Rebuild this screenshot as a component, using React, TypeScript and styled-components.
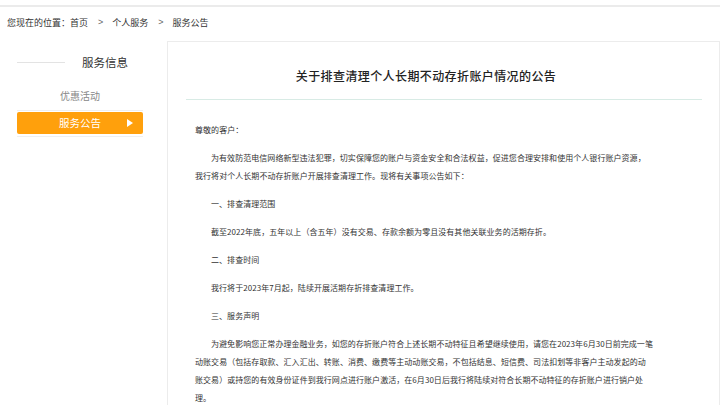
import React from 'react';
import styled, { createGlobalStyle } from 'styled-components';

const GlobalStyle = createGlobalStyle`
  html, body {
    margin: 0;
    padding: 0;
    background: #fff;
  }
  body {
    font-family: "Noto Sans CJK SC", "Liberation Sans", sans-serif;
    color: #333;
    overflow: hidden;
  }
`;

const Page = styled.div`
  width: 720px;
  height: 405px;
  overflow: hidden;
`;

const TopRule = styled.div`
  margin-top: 5px;
  height: 2px;
  background: #ebebeb;
`;

const Breadcrumb = styled.div`
  display: flex;
  align-items: center;
  margin: 8px 0 12px 7px;
  height: 14px;
  font-size: 9px;
  color: #333;
`;

const Crumb = styled.span``;

const Sep = styled.span`
  margin: 0 9px 0 10px;
  color: #666;
  font-family: "Liberation Sans", sans-serif;
`;

const Layout = styled.div`
  display: flex;
  align-items: flex-start;
`;

const Sidebar = styled.aside`
  width: 126px;
  margin-left: 17px;
  flex-shrink: 0;
`;

const SideTitle = styled.div`
  display: flex;
  align-items: center;
  padding-top: 14px;
  height: 14px;
  margin-bottom: 17px;
  font-size: 11.5px;
  line-height: 14px;
  color: #333;
`;

const SideLine = styled.span`
  width: 48px;
  height: 1px;
  background: #e3e3e3;
  margin-right: 17px;
`;

const MenuItem = styled.div`
  height: 24px;
  line-height: 20px;
  text-align: center;
  font-size: 10px;
  color: #888;
  border-bottom: 1px solid #efefef;
`;

const ActiveItem = styled.div`
  position: relative;
  margin-top: 1px;
  height: 22px;
  line-height: 22px;
  text-align: center;
  font-size: 10.5px;
  color: #fff;
  background: #ffa00c;
  border-radius: 2px;
`;

const Arrow = styled.span`
  position: absolute;
  right: 10px;
  top: 6.5px;
  width: 0;
  height: 0;
  border-top: 4.5px solid transparent;
  border-bottom: 4.5px solid transparent;
  border-left: 6px solid #fff;
`;

const SideBottom = styled.div`
  margin-top: 2px;
  height: 1px;
  background: #f0f0f0;
`;

const Main = styled.main`
  box-sizing: border-box;
  width: 553px;
  margin-left: 24px;
  height: 400px;
  border: 1px solid #ececec;
  border-bottom: none;
`;

const Title = styled.h1`
  margin: 0 0 13px 27px;
  padding-top: 24px;
  width: 462px;
  text-align: center;
  font-size: 12px;
  letter-spacing: 0.4px;
  line-height: 20px;
  font-weight: 500;
  color: #222;
`;

const Divider = styled.div`
  margin: 0 17px 0 18px;
  height: 1px;
  background: #d8ebe5;
`;

const Body = styled.div`
  width: 470px;
  margin-left: 27px;
  padding-top: 21px;
  font-size: 8px;
  letter-spacing: 0.05px;
  line-height: 18px;
  color: #333;
`;

const Para = styled.p<{ $indent?: boolean }>`
  margin: 0 0 10px;
  white-space: nowrap;
  text-indent: ${(p) => (p.$indent ? '16px' : '0')};
`;

type Block = { indent: boolean; lines: string[] };

const blocks: Block[] = [
  { indent: false, lines: ['尊敬的客户：'] },
  {
    indent: true,
    lines: [
      '为有效防范电信网络新型违法犯罪，切实保障您的账户与资金安全和合法权益，促进您合理安排和使用个人银行账户资源，',
      '我行将对个人长期不动存折账户开展排查清理工作。现将有关事项公告如下：',
    ],
  },
  { indent: true, lines: ['一、排查清理范围'] },
  {
    indent: true,
    lines: ['截至2022年底，五年以上（含五年）没有交易、存款余额为零且没有其他关联业务的活期存折。'],
  },
  { indent: true, lines: ['二、排查时间'] },
  { indent: true, lines: ['我行将于2023年7月起，陆续开展活期存折排查清理工作。'] },
  { indent: true, lines: ['三、服务声明'] },
  {
    indent: true,
    lines: [
      '为避免影响您正常办理金融业务，如您的存折账户符合上述长期不动特征且希望继续使用，请您在2023年6月30日前完成一笔',
      '动账交易（包括存取款、汇入汇出、转账、消费、缴费等主动动账交易，不包括结息、短信费、司法扣划等非客户主动发起的动',
      '账交易）或持您的有效身份证件到我行网点进行账户激活，在6月30日后我行将陆续对符合长期不动特征的存折账户进行销户处',
      '理。',
    ],
  },
];

export default function App() {
  return (
    <Page>
      <GlobalStyle />
      <TopRule />
      <Breadcrumb>
        <Crumb>您现在的位置：首页</Crumb>
        <Sep>&gt;</Sep>
        <Crumb>个人服务</Crumb>
        <Sep>&gt;</Sep>
        <Crumb>服务公告</Crumb>
      </Breadcrumb>
      <Layout>
        <Sidebar>
          <SideTitle>
            <SideLine />
            服务信息
          </SideTitle>
          <MenuItem>优惠活动</MenuItem>
          <ActiveItem>
            服务公告
            <Arrow />
          </ActiveItem>
          <SideBottom />
        </Sidebar>
        <Main>
          <Title>关于排查清理个人长期不动存折账户情况的公告</Title>
          <Divider />
          <Body>
            {blocks.map((b, i) => (
              <Para key={i} $indent={b.indent}>
                {b.lines.map((line, j) => (
                  <React.Fragment key={j}>
                    {j > 0 && <br />}
                    {line}
                  </React.Fragment>
                ))}
              </Para>
            ))}
          </Body>
        </Main>
      </Layout>
    </Page>
  );
}
